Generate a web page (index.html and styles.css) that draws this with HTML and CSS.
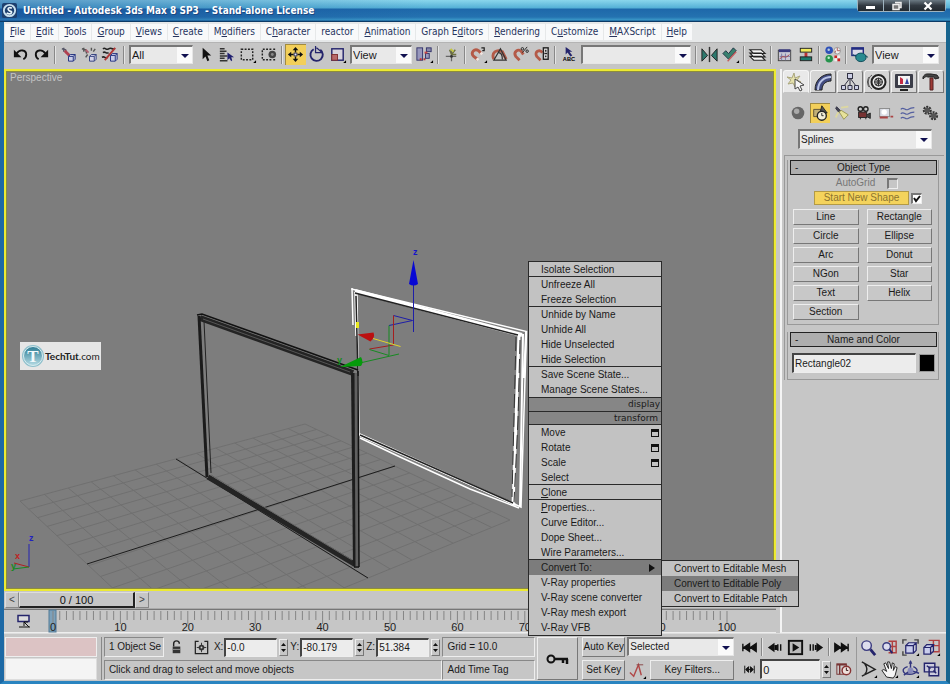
FILE: index.html
```html
<!DOCTYPE html>
<html lang="en">
<head>
<meta charset="utf-8">
<title>Untitled - Autodesk 3ds Max 8 SP3 - Stand-alone License</title>
<link rel="stylesheet" href="styles.css">
</head>
<body>
<div class="window">
  <header class="titlebar">
    <svg class="app-icon" viewBox="0 0 16 16"><rect width="16" height="16" rx="2" fill="#1d3f6e"/><circle cx="8" cy="8" r="6" fill="none" stroke="#c9e0ee" stroke-width="2"/><path d="M10.500 5.500C8 4 5.500 5.500 7 7.500s4 1 3 3-4 1-5 0" fill="none" stroke="#e8f4fa" stroke-width="1.800"/></svg>
    <h1>Untitled - Autodesk 3ds Max 8 SP3&nbsp; - Stand-alone License</h1>
    <div class="window-buttons">
      <button aria-label="Minimize"><svg viewBox="0 0 12 10"><rect x="1" y="5" width="9" height="3" fill="#fff"/></svg></button>
      <button aria-label="Restore"><svg viewBox="0 0 12 10"><path d="M4 1.500h6v5H8M2 3.500h6v5H2z" fill="#777" stroke="#eee" stroke-width="1.500"/></svg></button>
      <button class="close" aria-label="Close"><svg viewBox="0 0 12 10"><path d="M2.500 1.500l7 7m0-7l-7 7" stroke="#fff" stroke-width="2.200"/></svg></button>
    </div>
  </header>

  <nav class="menubar">
    <a href="#"><u>F</u>ile</a><a href="#"><u>E</u>dit</a><a href="#"><u>T</u>ools</a><a href="#"><u>G</u>roup</a><a href="#"><u>V</u>iews</a><a href="#"><u>C</u>reate</a><a href="#">M<u>o</u>difiers</a><a href="#">C<u>h</u>aracter</a><a href="#">reactor</a><a href="#"><u>A</u>nimation</a><a href="#">Graph E<u>d</u>itors</a><a href="#"><u>R</u>endering</a><a href="#">C<u>u</u>stomize</a><a href="#"><u>M</u>AXScript</a><a href="#"><u>H</u>elp</a>
  </nav>

  <div class="toolbar">
    <button aria-label="Undo"><svg viewBox="0 0 20 20"><path d="M6 9C9 4 16 5 16 10c0 2-1 4-3 5" fill="none" stroke="#111" stroke-width="2"/><path d="M3 5v8h8z" fill="#111"/></svg></button>
    <button aria-label="Redo"><svg viewBox="0 0 20 20"><path d="M14 9C11 4 4 5 4 10c0 2 1 4 3 5" fill="none" stroke="#111" stroke-width="2"/><path d="M17 5v8H9z" fill="#111"/></svg></button>
    <i></i>
    <button aria-label="Select and link"><svg viewBox="0 0 20 20"><path d="M3 4l4 1 1 4M5 3v4" fill="none" stroke="#556" stroke-width="1.500"/><path d="M6 6l5 5" stroke="#b04050" stroke-width="3"/><path d="M10 12h5v5h-5zM10 12l2-2h5l-2 2M17 10v5l-2 2" fill="#c9cde8" stroke="#223080"/></svg></button>
    <button aria-label="Unlink selection"><svg viewBox="0 0 20 20"><path d="M2 4l4 1 1 4M4 3v4M12 3v3M16 4l-2 3M8 10l-2 3" fill="none" stroke="#555" stroke-width="1.500"/><path d="M6 5l3 3" stroke="#b06070" stroke-width="2"/><path d="M10 12h5v5h-5zM10 12l2-2h5l-2 2M17 10v5l-2 2" fill="#d4d4e8" stroke="#334080"/></svg></button>
    <button aria-label="Bind to space warp"><svg viewBox="0 0 20 20"><path d="M2 4c3-2 3 2 6 0s3 1 6 0M2 8c3-2 3 2 6 0M1 13c3-2 3 2 6 0" fill="none" stroke="#222" stroke-width="1.600"/><path d="M4 16L15 3" stroke="#b03838" stroke-width="2"/><path d="M10 11h5v6h-5zM10 11l2-2h5l-2 2M17 9v6l-2 2" fill="#c9cde8" stroke="#223080"/></svg></button>
    <i></i>
    <select class="filter" aria-label="Selection filter"><option>All</option></select>
    <button aria-label="Select object"><svg viewBox="0 0 20 20"><path d="M7 3v12l3-3 2 5 2-1-2-5h4z" fill="#111"/></svg></button>
    <button aria-label="Select by name"><svg viewBox="0 0 20 20"><path d="M3 4h5M3 6.500h7M3 9h5M3 11.500h8M3 14h5M3 16.500h8" stroke="#333" stroke-width="1.500"/><path d="M11 8v8l2-2 2 3 1-1-1-3h3z" fill="#202070"/></svg></button>
    <button aria-label="Rectangular region"><svg viewBox="0 0 20 20"><rect x="3.500" y="4.500" width="12" height="11" fill="none" stroke="#222" stroke-width="1.500" stroke-dasharray="2 1.500"/><path d="M19 16v3h-3z" fill="#000"/></svg></button>
    <button aria-label="Window crossing"><svg viewBox="0 0 20 20"><path d="M13 4.500H3.500v11H13M17 4.500h-2M17 15.500h-2" fill="none" stroke="#222" stroke-width="1.500" stroke-dasharray="2 1.500"/><circle cx="14" cy="10" r="4" fill="#444"/><circle cx="14" cy="10" r="1.500" fill="#888"/></svg></button>
    <i></i>
    <button class="on" aria-label="Select and move"><svg viewBox="0 0 20 20"><path d="M10 2L7 5.500h6zM10 18l-3-3.500h6zM2 10l3.500-3v6zM18 10l-3.500-3v6z" fill="#111"/><path d="M10 5v3M10 12v3M5 10h3M12 10h3" stroke="#111" stroke-width="1.500"/><rect x="8.500" y="8.500" width="3" height="3" fill="#e9e9ff" stroke="#335"/></svg></button>
    <button aria-label="Select and rotate"><svg viewBox="0 0 20 20"><path d="M7 4.500A6.500 6.500 0 1 0 14 5" fill="none" stroke="#24246c" stroke-width="2"/><path d="M9 1v7h7M10 3l5 4" fill="none" stroke="#24246c" stroke-width="1.300"/></svg></button>
    <button aria-label="Select and scale"><svg viewBox="0 0 20 20"><rect x="4" y="4" width="12" height="12" fill="#d8d4dc" stroke="#24246c" stroke-width="1.500"/><rect x="4" y="10" width="6" height="6" fill="#b86868" stroke="#803030"/><path d="M19 16v3h-3z" fill="#000"/></svg></button>
    <select class="coords" aria-label="Reference coordinate system"><option>View</option></select>
    <button aria-label="Use pivot point center"><svg viewBox="0 0 20 20"><rect x="2" y="3" width="6" height="13" fill="#9898bd" stroke="#33336c"/><path d="M6 14v2M10 14v2" stroke="#b33" stroke-width="2"/><rect x="12" y="3" width="5" height="4" fill="#88a" stroke="#33336c"/><rect x="11" y="9" width="4" height="5" fill="#99b" stroke="#33336c"/><path d="M10 8h3" stroke="#c44" stroke-width="2"/><path d="M19 16v3h-3z" fill="#000"/></svg></button>
    <i></i>
    <button aria-label="Select and manipulate"><svg viewBox="0 0 20 20"><path d="M10 5v12M4 12h11" stroke="#666" stroke-width="1.300"/><path d="M10 10l-2-5M10 10l4-5M10 10l5 0" stroke="#6c7040" stroke-width="1.500"/><path d="M9 4l3 3" stroke="#c5c840" stroke-width="2"/><circle cx="10" cy="12" r="1.500" fill="#333"/></svg></button>
    <i></i>
    <button aria-label="Snaps toggle"><svg viewBox="0 0 20 20"><path d="M9 15l-4-3c-4-4 1-9 5-6l3 3" fill="none" stroke="#b45a48" stroke-width="3"/><path d="M8 16l2-2M12 10l2-2" stroke="#f0e4e0" stroke-width="2.500"/><path d="M13 3h3v3h-2" fill="none" stroke="#222" stroke-width="1.300"/><path d="M19 16v3h-3z" fill="#000"/></svg></button>
    <button aria-label="Angle snap"><svg viewBox="0 0 20 20"><path d="M4 15c-3-7 3-11 9-8l4 8" fill="none" stroke="#b45a48" stroke-width="3"/><path d="M4 16L11 4l6 12zM9 8c3 0 4 2 4 7" fill="none" stroke="#333" stroke-width="1.300"/></svg></button>
    <button aria-label="Percent snap"><svg viewBox="0 0 20 20"><path d="M9 16l-4-4c-3-5 3-9 6-5l2 3" fill="none" stroke="#b45a48" stroke-width="3"/><path d="M12 8l5-6" stroke="#222"/><circle cx="12" cy="4" r="1.300" fill="none" stroke="#222"/><circle cx="17" cy="6.500" r="1.300" fill="none" stroke="#222"/></svg></button>
    <button aria-label="Spinner snap"><svg viewBox="0 0 20 20"><path d="M9 16l-4-4c-3-5 3-8 6-4" fill="none" stroke="#b45a48" stroke-width="3"/><rect x="12" y="3" width="5" height="12" fill="#eee" stroke="#222" stroke-width="1.500"/><path d="M13 9h3M14.500 5v2M14.500 11v2" stroke="#222" stroke-width="1.500"/></svg></button>
    <i></i>
    <button aria-label="Named selection sets"><svg viewBox="0 0 20 20"><path d="M7 2v8l2-2 3 4 2-1-3-4h3z" fill="#24246c"/><text x="4" y="17">ABC</text></svg></button>
    <select class="named" aria-label="Named selection set"><option></option></select>
    <i></i>
    <button aria-label="Mirror"><svg viewBox="0 0 20 20"><path d="M2 4v13l6-6zM18 4v13l-6-6z" fill="#2d786d" stroke="#222"/><path d="M10 2v16" stroke="#333" stroke-width="1.500"/></svg></button>
    <button aria-label="Align"><svg viewBox="0 0 20 20"><path d="M2 9l3-3 3 3 5-6 3 3-8 9z" fill="#39816f" stroke="#234"/><path d="M7 17l9-10" stroke="#c46060" stroke-width="1.500"/><path d="M19 16v3h-3z" fill="#000"/></svg></button>
    <i></i>
    <button aria-label="Layer manager"><svg viewBox="0 0 20 20"><path d="M2 12l4 4h12l-4-4zM2 8.500l4 4h12l-4-4zM2 5l4 4h12l-4-4z" fill="#f5f5f5" stroke="#222" stroke-width="1.200"/></svg></button>
    <i></i>
    <button aria-label="Curve editor"><svg viewBox="0 0 20 20"><rect x="3.500" y="5.500" width="13" height="11" fill="#c9c9d5" stroke="#444"/><path d="M4 6h12" stroke="#3a3a80" stroke-width="3"/><path d="M7 9v7M11 9v7M5 12h11" stroke="#77a"/><path d="M5 15c3-6 6 1 10-5" fill="none" stroke="#a44"/></svg></button>
    <button aria-label="Schematic view"><svg viewBox="0 0 20 20"><path d="M10.500 8v5" stroke="#b33" stroke-width="3"/><rect x="4.500" y="3.500" width="12" height="4" fill="#f1ec5c" stroke="#222"/><rect x="4.500" y="12.500" width="12" height="4" fill="#1c7a6c" stroke="#222"/></svg></button>
    <i></i>
    <button aria-label="Material editor"><svg viewBox="0 0 20 20"><circle cx="6.500" cy="5.500" r="4" fill="#2d50b8"/><circle cx="6" cy="5" r="1.300" fill="#bcd"/><circle cx="15" cy="6" r="3.500" fill="#eee" stroke="#999"/><path d="M15 3v3h3M13 6v2" stroke="#a55" fill="none"/><circle cx="6.500" cy="14.500" r="4" fill="#25934c"/><circle cx="6" cy="13.500" r="1.300" fill="#bec"/><path d="M12 11h3v3h-3zM15 14h3v3h-3z" fill="#c22"/><path d="M15 11h3v3h-3zM12 14h3v3h-3z" fill="#eee"/></svg></button>
    <i></i>
    <button aria-label="Render scene"><svg viewBox="0 0 20 20"><rect x="2" y="3" width="12" height="8" fill="#dadae8" stroke="#222c82" stroke-width="1.500"/><path d="M2 4h12" stroke="#222c82" stroke-width="2"/><path d="M6 13c0-6 11-6 11 0s-11 6-11 0M6 12l-3-2M16 11l3 2" fill="#288a90" stroke="#114c5a"/></svg></button>
    <select class="render" aria-label="Render type"><option>View</option></select>
  </div>

  <main class="main">
    <section class="stage">
      <div class="viewport">
        <svg class="scene" viewBox="7 72 766 517" preserveAspectRatio="xMinYMin slice">
          <g id="floor" class="floor"></g>
          <path d="M176 459L368 578M87 564L395 466" stroke="#1c1c1c"/>
          <g fill="none" stroke="#fff">
            <path d="M351.500 289L526.500 331.500L521 507L360 436" stroke-width="1.500"/>
            <path d="M355 291L522 335" stroke-width="4"/>
            <path d="M352 288l1 37M355 292l1 44M357 294l2 142" stroke-width="1.500"/>
            <path d="M519 334l-6 172" stroke-width="3"/>
            <path d="M523 334l-3 172M526 332l-2 46" stroke-width="2"/>
            <path d="M359 434L516 505" stroke-width="2"/>
            <path d="M360 438L400 457L470 489L519 508" stroke-width="1.500"/>
          </g>
          <path d="M355 293l163 42M360 435l153 68M356 296l2 80" fill="none" stroke="#222" stroke-width="1.500"/>
          <path d="M520 340l-2 80-4 82M516 337l-4 160" fill="none" stroke="#333" stroke-dasharray="14 5"/>
          <g fill="none">
            <path d="M200 318L353 373" stroke="#242424" stroke-width="6"/>
            <path d="M203 319L350 372" stroke="#555" />
            <path d="M199 316L207 477" stroke="#1b1b1b" stroke-width="3"/>
            <path d="M204 321L211 473" stroke="#222"/>
            <path d="M208 477L356 565" stroke="#242424" stroke-width="5"/>
            <path d="M211 475L352 560" stroke="#666"/>
            <path d="M353 373L355 566" stroke="#1d1d1d" stroke-width="4"/>
            <path d="M356 373L357 566" stroke="#606060" stroke-width="3"/>
            <path d="M358 371L359 567M197 315l5-1 156 56M354 567h5" stroke="#111" stroke-width="1.500"/>
          </g>
          <path d="M413.500 332V283M393.500 315.500L412.500 320.500L389 325.500" fill="none" stroke="#1e1ea8"/>
          <path d="M413.500 260l-4.500 24q4.500 3 9 0z" fill="#0808d4"/>
          <path d="M393.500 315.500V345L369.500 349" fill="none" stroke="#a51e1e"/>
          <path d="M389 325.500V355.500L369.500 349.500M362 362.500L399 354" fill="none" stroke="#178a22"/>
          <path d="M373 338.500l27.500 8" stroke="#e2d52a"/>
          <path d="M357.500 334.500l16-2q2 5-3 9z" fill="#bb1010"/>
          <path d="M340 367l21-10q3 5 0 9z" fill="#069a0c"/>
          <path d="M357.500 322v6" stroke="#e8e820" stroke-width="3"/>
          <text x="413" y="255" fill="#1616c8">z</text>
          <text x="337" y="363" fill="#128a1a">y</text>
          <path d="M29 567v-23" stroke="#2424b4"/>
          <path d="M29 567l-15-4" stroke="#b02020"/>
          <path d="M29 567l-16 2" stroke="#188a22"/>
          <text x="29" y="541" fill="#2222c0">z</text>
          <text x="15" y="559" fill="#c02222">x</text>
          <text x="11" y="569" fill="#188a22">y</text>
        </svg>
        <span class="view-name">Perspective</span>
        <div class="watermark">
          <svg viewBox="0 0 24 24"><defs><linearGradient id="disc" x2="0" y2="1"><stop offset="0" stop-color="#2c7c94"/><stop offset="1" stop-color="#b5dbe4"/></linearGradient></defs><circle cx="12" cy="12" r="11" fill="#8fc0cc"/><circle cx="12" cy="12" r="9.500" fill="url(#disc)" stroke="#d7ebef"/><text x="12" y="18" text-anchor="middle">T</text></svg>
          <span><b>TechTut</b>.com</span>
        </div>

        <div class="quad">
          <ul>
            <li class="end">Isolate Selection</li>
            <li>Unfreeze All</li>
            <li class="end">Freeze Selection</li>
            <li>Unhide by Name</li>
            <li>Unhide All</li>
            <li>Hide Unselected</li>
            <li class="end">Hide Selection</li>
            <li>Save Scene State...</li>
            <li>Manage Scene States...</li>
          </ul>
          <h2>display</h2>
          <h2>transform</h2>
          <ul>
            <li>Move<b class="box"></b></li>
            <li>Rotate<b class="box"></b></li>
            <li>Scale<b class="box"></b></li>
            <li class="end">Select</li>
            <li class="end"><span><u>C</u>lone</span></li>
            <li><span><u>P</u>roperties...</span></li>
            <li>Curve Editor...</li>
            <li>Dope Sheet...</li>
            <li class="end">Wire Parameters...</li>
            <li class="hot">Convert To:<b class="more"></b>
              <ul class="submenu">
                <li>Convert to Editable Mesh</li>
                <li class="hot">Convert to Editable Poly</li>
                <li>Convert to Editable Patch</li>
              </ul>
            </li>
            <li>V-Ray properties</li>
            <li>V-Ray scene converter</li>
            <li>V-Ray mesh export</li>
            <li>V-Ray VFB</li>
          </ul>
        </div>
      </div>

      <div class="slider">
        <button aria-label="Previous frame">&lt;</button>
        <button class="thumb">0 / 100</button>
        <button aria-label="Next frame">&gt;</button>
      </div>
      <div class="trackbar">
        <svg class="track-icon" viewBox="0 0 16 16"><path d="M2 2.500h11v6H2z" fill="#ddd" stroke="#24246c" stroke-width="1.500"/><path d="M13 14L8 9m0 4V9h4M3 14h11" fill="none" stroke="#111"/></svg>
        <svg class="ruler" id="ruler"></svg>
      </div>
    </section>

    <aside class="panel">
      <div class="tabs">
        <button class="active" aria-label="Create"><svg viewBox="0 0 20 20"><path d="M8 1l1 5 5-2-3 4 4 2-5 1-1 4-2-4-5 1 3-4-4-3 5 1z" fill="#e6e2ad" stroke="#aaa67c"/><path d="M9 7l9 6-4 1 2 4-2 1-2-4-3 2z" fill="#f7f7f7" stroke="#444"/></svg></button>
        <button aria-label="Modify"><svg viewBox="0 0 20 20"><path d="M2 18C2 8 9 2 18 2v7c-5 0-9 3-9 9z" fill="#424c80" stroke="#222"/><path d="M5 18C5 10 11 5 18 5" fill="none" stroke="#bcc6e8" stroke-width="2"/></svg></button>
        <button aria-label="Hierarchy"><svg viewBox="0 0 20 20"><path d="M10 6L4 14M10 6v8M10 6l6 8" stroke="#334" fill="none"/><rect x="7.500" y="1.500" width="5" height="5" fill="#cdd0e6" stroke="#334"/><path d="M1.500 13.500h4v4h-4zM8 13.500h4v4H8zM14.500 13.500h4v4h-4z" fill="#cdd0e6" stroke="#334"/></svg></button>
        <button aria-label="Motion"><svg viewBox="0 0 20 20"><path d="M5 3C0 6 0 14 5 17M2 5c-2 3-2 7 0 10" fill="none" stroke="#555"/><circle cx="11.500" cy="10" r="7" fill="#eee" stroke="#222" stroke-width="2"/><circle cx="11.500" cy="10" r="4" fill="#bbb" stroke="#333"/><path d="M11.500 6v8M7.500 10h8M9 7l5 6M14 7l-5 6" stroke="#333"/></svg></button>
        <button aria-label="Display"><svg viewBox="0 0 20 20"><rect x="1" y="2" width="18" height="14" rx="1" fill="#3b3d48"/><rect x="4" y="4" width="12" height="9" fill="#f4f4f4"/><path d="M6 5v7h3V7z" fill="#c42c45"/><path d="M11 12l2-6 2 6z" fill="#3546a8"/><path d="M6 18h8" stroke="#222" stroke-width="2"/></svg></button>
        <button aria-label="Utilities"><svg viewBox="0 0 20 20"><path d="M2 5c2-4 5-3 8-3l6 1 2 3-4 1-1-2H7C5 4 4 5 2 7z" fill="#444" stroke="#222"/><path d="M9 6h3v12H9z" fill="#9e3b36" stroke="#522"/></svg></button>
      </div>
      <div class="panel-body">
        <div class="kinds">
          <button aria-label="Geometry"><svg viewBox="0 0 20 20"><circle cx="10" cy="10" r="7" fill="#666"/><circle cx="8.500" cy="8" r="3" fill="#aaa"/></svg></button>
          <button class="on" aria-label="Shapes"><svg viewBox="0 0 20 20"><path d="M3 6h8v8H3z" fill="#c2b077" stroke="#574e36"/><path d="M12 2l6 8h-8z" fill="#555" stroke="#222"/><circle cx="12" cy="13" r="5" fill="#f3eed8" stroke="#222" stroke-width="1.500"/><path d="M12 10v3h2" fill="none" stroke="#222"/></svg></button>
          <button aria-label="Lights"><svg viewBox="0 0 20 20"><path d="M4 3l5 5-2 2-4-5z" fill="#445" stroke="#334"/><path d="M9 7l8 5-5 5-5-8z" fill="#e7e29a" stroke="#989550"/><path d="M9 4l8-1M3 15l3-6" stroke="#ddd8a0" stroke-width="2"/></svg></button>
          <button aria-label="Cameras"><svg viewBox="0 0 20 20"><circle cx="6" cy="5.500" r="2.500" fill="#ccc" stroke="#222" stroke-width="1.500"/><circle cx="12" cy="5.500" r="2.500" fill="#ccc" stroke="#222" stroke-width="1.500"/><rect x="4" y="9" width="9" height="6" fill="#733" stroke="#222"/><path d="M13 12l4-2v6l-4-2M6 15v2M12 15v2" fill="#444" stroke="#222"/></svg></button>
          <button aria-label="Helpers"><svg viewBox="0 0 20 20"><rect x="3" y="5" width="11" height="9" fill="#d9dce4" stroke="#888"/><circle cx="8" cy="9" r="3" fill="#fff"/><path d="M3 15h9M15 14h3" stroke="#a44" stroke-width="2"/></svg></button>
          <button aria-label="Space warps"><svg viewBox="0 0 20 20"><path d="M2 6c3-4 5 2 8 0s4-2 7-2M2 11c3-4 5 2 8 0s4-2 7-2M2 16c3-4 5 2 8 0s4-2 7-2" fill="none" stroke="#5560a0" stroke-width="1.300"/></svg></button>
          <button aria-label="Systems"><svg viewBox="0 0 20 20"><circle cx="7" cy="7" r="3.500" fill="none" stroke="#333" stroke-width="3" stroke-dasharray="2 1"/><circle cx="7" cy="7" r="3" fill="#555"/><circle cx="14" cy="13" r="3.500" fill="none" stroke="#333" stroke-width="3" stroke-dasharray="2 1"/><circle cx="14" cy="13" r="3" fill="#555"/></svg></button>
        </div>
        <select class="category" aria-label="Category"><option>Splines</option></select>
      </div>
      <div class="rollouts">
        <section class="rollout">
          <h2><span>-</span>Object Type</h2>
          <label class="autogrid">AutoGrid<input type="checkbox" disabled></label>
          <div class="newshape"><button id="newshape">Start New Shape</button><input type="checkbox" aria-labelledby="newshape" checked></div>
          <div class="types">
            <button>Line</button><button>Rectangle</button>
            <button>Circle</button><button>Ellipse</button>
            <button>Arc</button><button>Donut</button>
            <button>NGon</button><button>Star</button>
            <button>Text</button><button>Helix</button>
            <button>Section</button>
          </div>
        </section>
        <section class="rollout">
          <h2><span>-</span>Name and Color</h2>
          <div class="name-row"><input type="text" aria-label="Object name" value="Rectangle02"><button class="swatch" aria-label="Object color"></button></div>
        </section>
      </div>
    </aside>
  </main>

  <footer class="bottom">
    <div class="listener"><div class="macro"></div><div class="script"></div></div>
    <div class="status">
      <div class="row">
        <output class="well selected">1 Object Se</output>
        <button class="flat" aria-label="Selection lock"><svg viewBox="0 0 20 20"><path d="M7 9V6c0-4 6-4 6 0" fill="none" stroke="#222" stroke-width="1.500"/><rect x="6" y="9" width="8" height="7" fill="#333"/><path d="M6 12h8" stroke="#999"/></svg></button>
        <button class="flat" aria-label="Absolute mode"><svg viewBox="0 0 20 20"><path d="M7 3.500H3.500v13h13v-13H13" fill="none" stroke="#222" stroke-width="1.300"/><path d="M5 10h10M10 5v10" stroke="#333"/><circle cx="10" cy="10" r="3" fill="#333"/><circle cx="10" cy="10" r="1" fill="#ccc"/></svg></button>
        <label>X:<input type="text" value="-0.0"></label><b class="spin"></b>
        <label>Y:<input type="text" value="-80.179"></label><b class="spin"></b>
        <label>Z:<input type="text" value="51.384"></label><b class="spin"></b>
      </div>
      <div class="row"><output class="well prompt">Click and drag to select and move objects</output></div>
    </div>
    <div class="grid-info"><output class="well">Grid = 10.0</output><output class="well">Add Time Tag</output></div>
    <button class="big-key" aria-label="Set keys"><svg viewBox="0 0 24 14"><circle cx="5" cy="7" r="3.500" fill="none" stroke="#111" stroke-width="2"/><path d="M9 7h13M17 7v4M21 7v5" stroke="#111" stroke-width="2.500"/></svg></button>
    <div class="keying">
      <button>Auto Key</button>
      <select aria-label="Key set"><option>Selected</option></select>
      <button>Set Key</button>
      <div class="row">
        <button class="flat tangent" aria-label="Default tangents"><svg viewBox="0 0 20 20"><path d="M2 12l4 4 5-12 3 11" fill="none" stroke="#b04848" stroke-width="1.500"/><path d="M9 4h7" stroke="#844"/><path d="M19 16v3h-3z" fill="#000"/></svg></button>
        <button class="filters">Key Filters...</button>
      </div>
    </div>
    <div class="playback">
      <div class="row">
        <button class="flat" aria-label="Go to start"><svg viewBox="0 0 20 20"><path d="M3 6v8M10 6v8l-6-4zM17 6v8l-6-4z" fill="#111" stroke="#111" stroke-width="1.500"/></svg></button>
        <i></i>
        <button class="flat" aria-label="Previous frame"><svg viewBox="0 0 20 20"><path d="M10 5v10l-7-5z" fill="#111"/><path d="M10 8h2v4h-2M13.500 6.500v7M16.500 6.500v7" stroke="#111" stroke-width="1.500"/></svg></button>
        <button class="flat" aria-label="Play"><svg viewBox="0 0 20 20"><rect x="3" y="3" width="14" height="14" fill="#bbb" stroke="#111" stroke-width="2"/><path d="M7 5.500v9l7-4.500z" fill="#111"/></svg></button>
        <button class="flat" aria-label="Next frame"><svg viewBox="0 0 20 20"><path d="M10 5v10l7-5z" fill="#111"/><path d="M10 8H9v4h1M6.500 6.500v7M3.500 6.500v7" stroke="#111" stroke-width="1.500"/></svg></button>
        <i></i>
        <button class="flat" aria-label="Go to end"><svg viewBox="0 0 20 20"><path d="M17 6v8M10 6v8l6-4zM3 6v8l6-4z" fill="#111" stroke="#111" stroke-width="1.500"/></svg></button>
      </div>
      <div class="row">
        <button class="flat" aria-label="Key mode"><svg viewBox="0 0 20 20"><path d="M5 6v8M15 6v8M9 7v6L6 10zM11 7v6l3-3zM9 10h2" fill="#111" stroke="#111"/></svg></button>
        <input class="frame" type="text" aria-label="Current frame" value="0"><b class="spin"></b>
        <button class="flat" aria-label="Time configuration"><svg viewBox="0 0 20 20"><rect x="3" y="4" width="10" height="11" fill="#ccc" stroke="#733"/><path d="M3 5h10M6 5v10" stroke="#733" stroke-width="1.500"/><circle cx="13" cy="11" r="4.500" fill="#eee0dc" stroke="#833" stroke-width="1.500"/><path d="M13 8v3h2" fill="none" stroke="#311"/></svg></button>
      </div>
    </div>
    <div class="nav">
      <button class="flat" aria-label="Zoom"><svg viewBox="0 0 20 20"><circle cx="8" cy="8" r="5" fill="#dde" stroke="#3c3c80" stroke-width="1.500"/><path d="M12 12l5 6" stroke="#24246c" stroke-width="3"/></svg></button>
      <button class="flat" aria-label="Zoom all"><svg viewBox="0 0 20 20"><path d="M9 3.500h8v12h-8M13 3v12M9 9h8" fill="none" stroke="#b04040" stroke-width="1.500"/><circle cx="7" cy="9" r="4" fill="#dde" stroke="#3c3c80" stroke-width="1.500"/><path d="M10 12l3 4" stroke="#24246c" stroke-width="2"/></svg></button>
      <button class="flat" aria-label="Zoom extents"><svg viewBox="0 0 20 20"><path d="M5 8h8v8H5zM5 8l3-3h8l-3 3M16 5v8l-3 3" fill="#c9cdec" stroke="#24246c" stroke-width="1.300"/><path d="M2 6V2h4M14 2h4v4M2 14v4h4" fill="none" stroke="#444" stroke-width="1.500"/><path d="M19 16v3h-3z" fill="#000"/></svg></button>
      <button class="flat" aria-label="Zoom extents all"><svg viewBox="0 0 20 20"><path d="M7 2.500h11v12H7M12 3v11M7 8h11" fill="none" stroke="#b04040" stroke-width="1.500"/><path d="M2 10h7v7H2zM2 10l3-3h7l-3 3M12 7v7l-3 3" fill="#c9cdec" stroke="#24246c" stroke-width="1.300"/><path d="M19 16v3h-3z" fill="#000"/></svg></button>
      <button class="flat" aria-label="Field of view"><svg viewBox="0 0 20 20"><path d="M3 2l14 8-14 7M6 4c3 4 3 8 0 11" fill="none" stroke="#222" stroke-width="1.500"/><path d="M19 16v3h-3z" fill="#000"/></svg></button>
      <button class="flat" aria-label="Pan"><svg viewBox="0 0 20 20"><path d="M7 18l-5-7 2-1 3 2-3-8 2-1 3 6-1-7 2 0 2 7 1-6 2 1-1 7 2-4 2 1-2 8-2 3z" fill="#f5f5f5" stroke="#222"/><path d="M19 16v3h-3z" fill="#000"/></svg></button>
      <button class="flat" aria-label="Arc rotate"><svg viewBox="0 0 20 20"><path d="M10 1v10l-7 5M10 11l9 3" fill="none" stroke="#33367e" stroke-width="1.500"/><path d="M7 7c-7 2-6 8 2 8s11-5 4-8" fill="none" stroke="#33367e" stroke-width="1.500"/><circle cx="10" cy="11" r="3" fill="#888abb"/><path d="M10 0l-2 4h4z" fill="#33367e"/><path d="M19 16v3h-3z" fill="#000"/></svg></button>
      <button class="flat" aria-label="Maximize viewport"><svg viewBox="0 0 20 20"><path d="M2.500 3.500h11v9h-11zM7.500 7.500h10v9h-10z" fill="#ccd" stroke="#24246c" stroke-width="1.500"/><path d="M5 6l4 3M12 11l3 3" stroke="#24246c" stroke-width="1.500"/></svg></button>
    </div>
  </footer>
</div>
<script src="app.js"></script>
</body>
</html>
```
FILE: styles.css
```css
* { box-sizing: border-box; }
body { margin: 0; font: 10px/12px "Liberation Sans", Arial, sans-serif; color: #1a1a1a; background: #c4c4c4; }
button, input, select, output { font: inherit; color: inherit; margin: 0; border-radius: 0; }
button { padding: 0; border: 0; background: none; }
h1, h2, ul { margin: 0; padding: 0; list-style: none; font: inherit; }
svg { display: block; }
svg text { font: bold 6px "Liberation Sans", sans-serif; }

.window { min-height: 100vh; display: flex; flex-direction: column; border: solid #17648e; border-width: 0 4px 3px; border-left-color: #1d69a5; border-bottom-color: #2a84c0; }

/* title bar */
.titlebar { height: 22px; margin: 0 -4px; padding-left: 2px; display: flex; align-items: center; gap: 6px; border-bottom: 1px solid #0c3a66;
  background: linear-gradient(90deg, rgba(15,60,140,.4), rgba(15,60,140,0) 45%), linear-gradient(#8ad6ec, #54b0d6 8px, #1e68aa 9px, #2472b0 17px, #3a98c8 20px, #17558c); }
.app-icon { width: 15px; height: 15px; }
.titlebar h1 { flex: 1; font: bold 10px/20px "DejaVu Sans Condensed", "DejaVu Sans", sans-serif; font-stretch: condensed; color: #fff; white-space: nowrap; text-shadow: 1px 1px #1c4780; }
.window-buttons { align-self: flex-start; display: flex; gap: 1px; margin-right: 4px; padding: 0 1px 1px; background: #9fb4c0; border-radius: 0 0 4px 4px; }
.window-buttons button { width: 25px; height: 11px; display: grid; place-items: center; background: linear-gradient(#6b7983, #323a42 50%, #232a30); }
.window-buttons .close { width: 35px; }
.window-buttons svg { width: 12px; height: 10px; }

/* menu bar */
.menubar { height: 20px; padding: 2px 0 2px 1px; display: flex; gap: 1px; background: #e6e8e9; }
.menubar a { padding: 0 5px; font: 10px/16px "DejaVu Sans Condensed", "DejaVu Sans", sans-serif; font-stretch: condensed; color: #27345e; text-decoration: none; background: #f8f9fa; white-space: nowrap; }

/* main toolbar */
.toolbar { height: 27px; padding: 0 5px 3px 6px; display: flex; align-items: center; background: #c6c6c6; border-top: 1px solid #b4b4b4; }
.toolbar button { flex: none; width: 21px; height: 21px; display: grid; place-items: center; }
.toolbar svg { width: 19px; height: 19px; }
.toolbar i, .playback i { flex: none; width: 2px; height: 18px; margin: 0 2px; border-left: 1px solid #888; border-right: 1px solid #e4e4e4; }
.on { background: #f2cf5a; box-shadow: inset 1px 1px #a08a40; }
select { appearance: none; height: 19px; padding: 0 1px; border: 1px solid #e6e6e6; border-top: 2px solid #777; border-left: 2px solid #777;
  background: #e9e9e9 url("data:image/svg+xml,%3Csvg xmlns='http://www.w3.org/2000/svg' width='15' height='20'%3E%3Cpath fill='%23fafafa' d='M0 0h15v20H0z'/%3E%3Cpath fill='%23101050' d='M4 7h8l-4 4z'/%3E%3C/svg%3E") no-repeat right top; }
.toolbar select { margin: 0 2px; font-size: 11px; }
.filter { width: 64px; }
.coords { width: 62px; }
.named { width: 110px; }
.render { flex: 1; }

/* viewport */
.main { flex: 1; display: flex; background: #c6c6c6; }
.stage { flex: 1; min-width: 0; display: flex; flex-direction: column; }
.viewport { position: relative; flex: 1; border: 2px solid #ecea33; outline: 1px solid #8d8d3c; outline-offset: -3px; padding: 1px; background: #7d7d7d; }
.scene { position: absolute; inset: 1px; width: calc(100% - 2px); height: calc(100% - 2px); }
.scene text { font: bold 9px "Liberation Sans", sans-serif; }
.floor { stroke: #707070; }
.view-name { position: absolute; left: 4px; top: 1px; color: #c4c4c4; }
.watermark { position: absolute; left: 14px; top: 271px; height: 28px; padding: 0 1px; display: flex; align-items: center; background: #e6e6e6; font: 10px/14px Lato, sans-serif; color: #222; }
.watermark svg { width: 24px; height: 24px; }
.watermark text { font: bold 17px "Liberation Serif", serif; fill: #f2fafc; }

/* quad menu */
.quad { position: absolute; z-index: 5; left: 522px; top: 190px; width: 134px; border: 1px solid #2a2a2a; background: #c2c2c2; }
.quad li { position: relative; height: 15px; padding: 1px 2px 0 12px; display: flex; justify-content: space-between; align-items: center; line-height: 14px; white-space: nowrap; }
.quad .end { border-bottom: 1px solid #2a2a2a; }
.quad .hot { background: #7c7c7c; }
.quad h2 { height: 14px; padding-right: 1px; text-align: right; font: 9px/13px "DejaVu Sans", sans-serif; background: #868686; border-top: 1px solid #2a2a2a; }
.quad h2 + h2 { padding-right: 3px; line-height: 12px; border-bottom: 1px solid #2a2a2a; }
.box { width: 8px; height: 8px; border: 1px solid #111; border-top-width: 3px; }
.more { margin-right: 4px; border: 4px solid transparent; border-left: 6px solid #111; border-right: 0; }
.submenu { position: absolute; left: 132px; top: 0; width: 138px; border: 1px solid #2a2a2a; background: #c2c2c2; }

/* time slider and track bar */
.slider { height: 18px; padding: 1px 1px 0; display: flex; border-bottom: 1px solid #aaa; }
.slider button { width: 14px; border: 1px solid #ddd; border-right-color: #888; border-bottom-color: #888; color: #444; }
.slider .thumb { width: 116px; font-size: 11px; color: #111; border-right: 2px solid #222; border-bottom: 2px solid #222; }
.trackbar { height: 24px; display: flex; border-top: 1px solid #777; border-bottom: 1px solid #eee; }
.track-icon { width: 16px; height: 16px; margin: 3px 21px 0 12px; }
.ruler { flex: 1; height: 22px; margin-right: 49px; overflow: visible; stroke: #858585; }
.ruler text { font: 11px "Liberation Sans", sans-serif; fill: #222; stroke: none; text-anchor: middle; }
.ruler rect { fill: #7ba0ba; stroke: #527a96; }

/* command panel */
.panel { margin-left: 4px; flex: none; width: 166px; border-left: 2px solid #f4f4f4; border-bottom: 1px solid #eee; }
.tabs { display: flex; gap: 1px; padding: 1px 2px 0 1px; }
.tabs button { flex: 1; height: 23px; display: grid; place-items: center; border: 1px solid #777; border-top-color: #f5f5f5; border-left-color: #f5f5f5; border-radius: 3px 3px 0 0; background: #d5d5d5; }
.tabs .active { background: #e9e9e9; border-color: #f5f5f5; border-bottom-color: #c6c6c6; }
.tabs svg { width: 20px; height: 20px; }
.panel-body { padding: 10px 13px 6px 6px; }
.kinds { display: flex; gap: 2px; }
.kinds button { flex: none; width: 20px; height: 20px; display: grid; place-items: center; }
.kinds svg { width: 18px; height: 18px; }
.category { display: block; width: 134px; height: 20px; margin: 6px 0 0 10px; }
.rollouts { margin: 0 2px 0 2px; padding: 4px 5px 0 2px; border: solid #999; border-width: 1px 0 0 1px; }
.rollout { margin-bottom: 7px; padding: 0 6px 4px 5px; border: 1px solid #999; border-top: 0; }
.rollout h2 { position: relative; height: 15px; margin: 0 -5px 0 -3px; border: 1px solid #222; background: #aeaeae; text-align: center; line-height: 13px; }
.rollout h2 span { position: absolute; left: 4px; }
.autogrid { display: flex; justify-content: center; align-items: center; gap: 12px; height: 16px; margin-left: 9px; color: #777; }
input[type=checkbox] { appearance: none; width: 11px; height: 11px; border: 1px solid #eee; border-top: 2px solid #777; border-left: 2px solid #777; }
input[type=checkbox]:checked { background: #fff url("data:image/svg+xml,%3Csvg xmlns='http://www.w3.org/2000/svg' width='8' height='8'%3E%3Cpath fill='none' stroke='%23111' stroke-width='2' d='M1 3l2 3 4-5'/%3E%3C/svg%3E") no-repeat; }
.newshape { display: flex; align-items: center; gap: 2px; margin-left: 21px; }
.newshape button { width: 95px; height: 14px; line-height: 12px; color: #8b7430; background: #f4d35c; border: 1px solid #b39a45; }
.types { display: grid; grid-template-columns: 1fr 1fr; gap: 3px 8px; margin-top: 4px; }
.types button { height: 16px; line-height: 14px; }
.types button, .keying button:not(.flat), .big-key { background: #c8c8c8; border: 1px solid #eee; border-right-color: #777; border-bottom-color: #777; }
.name-row { display: flex; gap: 3px; margin: 6px -3px 2px -1px; }
.name-row input { flex: 1; min-width: 0; height: 20px; }
input[type=text] { padding: 0 1px; border: 1px solid #eee; border-top: 2px solid #444; border-left: 2px solid #444; background: #ececec; }
.swatch { width: 16px; height: 18px; margin-top: 1px; background: #000; border: 1px solid #999; }

/* status and playback */
.bottom { height: 48px; padding: 3px 4px 1px 1px; display: flex; background: #c6c6c6; border-top: 1px solid #ddd; font-size: 11px; }
.bottom .row { display: flex; align-items: center; }
.flat { flex: none; display: grid; place-items: center; width: 21px; height: 20px; }
.flat svg { width: 19px; height: 19px; }
.listener { width: 92px; display: grid; grid-template-rows: 20px 22px; gap: 1px; }
.macro { background: #dcc3c4; border: 1px solid #eee; }
.script { background: #f4f4f4; border: 1px solid #ddd; }
.status { width: 342px; margin-left: 4px; padding-left: 2px; border-left: 1px solid #888; display: grid; grid-template-rows: 20px 20px; row-gap: 3px; }
.well { display: block; overflow: hidden; height: 20px; padding: 0 4px; line-height: 18px; font-size: 10px; white-space: nowrap; border: 1px solid #eee; border-top-color: #888; border-left-color: #888; }
.selected { width: 60px; }
.prompt { flex: 1; }
.status .flat { width: 25px; }
.status label { flex: none; display: flex; align-items: center; font-size: 10px; }
.status label input { width: 53px; height: 19px; margin-left: 1px; }
.spin { flex: none; width: 9px; height: 17px; margin: 0 2px; border: 1px solid #eee; border-right-color: #777; border-bottom-color: #777; background: url("data:image/svg+xml,%3Csvg xmlns='http://www.w3.org/2000/svg' width='7' height='15'%3E%3Cpath fill='%23111' d='M1 6l2.500-3L6 6zM1 9l2.500 3L6 9z'/%3E%3C/svg%3E") no-repeat center; }
.grid-info { width: 93px; display: grid; grid-template-rows: 20px 20px; row-gap: 3px; }
.big-key { width: 41px; height: 43px; margin: 0 4px 0 2px; display: grid; place-items: center; }
.big-key svg { width: 24px; height: 14px; }
.keying { width: 154px; display: grid; grid-template: 20px 20px / 43px 107px; gap: 3px 2px; font-size: 10px; }
.keying select { height: 19px; font-size: 10px; }
.keying .filters { flex: 1; height: 20px; }
.tangent { margin-right: 2px; }
.playback { width: 120px; padding-left: 3px; display: grid; grid-template-rows: 20px 20px; row-gap: 2px; }
.playback i { margin: 0 1px; }
.frame { width: 60px; height: 20px; }
.nav { flex: 1; padding-left: 1px; border-left: 1px solid #999; display: grid; grid-template: 20px 20px / repeat(4, 1fr); row-gap: 2px; }
```
FILE: app.js
```js
const NS = 'http://www.w3.org/2000/svg';
function add(parent, tag, attrs, text) {
  const el = document.createElementNS(NS, tag);
  for (const k in attrs) el.setAttribute(k, attrs[k]);
  if (text !== undefined) el.textContent = text;
  parent.appendChild(el);
}

// Ground plane: a 14 x 14 grid projected onto the quad a-b-c-d.
const a = [20, 501], b = [305, 424], c = [510, 520], d = [182.6, 653.8];
const sx = a[0] - b[0] + c[0] - d[0], sy = a[1] - b[1] + c[1] - d[1];
const dx1 = b[0] - c[0], dx2 = d[0] - c[0], dy1 = b[1] - c[1], dy2 = d[1] - c[1];
const den = dx1 * dy2 - dx2 * dy1;
const g = (sx * dy2 - dx2 * sy) / den, h = (dx1 * sy - sx * dy1) / den;
function project(u, v) {
  const w = g * u + h * v + 1;
  return [
    ((b[0] - a[0] + g * b[0]) * u + (d[0] - a[0] + h * d[0]) * v + a[0]) / w,
    ((b[1] - a[1] + g * b[1]) * u + (d[1] - a[1] + h * d[1]) * v + a[1]) / w
  ];
}
const floor = document.getElementById('floor');
function line(p, q) { add(floor, 'line', { x1: p[0], y1: p[1], x2: q[0], y2: q[1] }); }
for (let i = 0; i <= 14; i++) {
  line(project(i / 14, 0), project(i / 14, 1));
  line(project(0, i / 14), project(1, i / 14));
}

// Track bar: one tick per frame, with labels where the open menu leaves them in view.
const labels = [0, 10, 20, 30, 40, 50, 60, 70, 90, 100];
const ruler = document.getElementById('ruler');
add(ruler, 'rect', { x: -4, y: 0, width: 7, height: 22 });
for (let f = 0; f <= 100; f++) {
  add(ruler, 'line', { x1: f + '%', x2: f + '%', y1: 1, y2: f % 10 ? 10 : 14 });
  if (labels.includes(f)) add(ruler, 'text', { x: f + '%', y: 21 }, f);
}
```
